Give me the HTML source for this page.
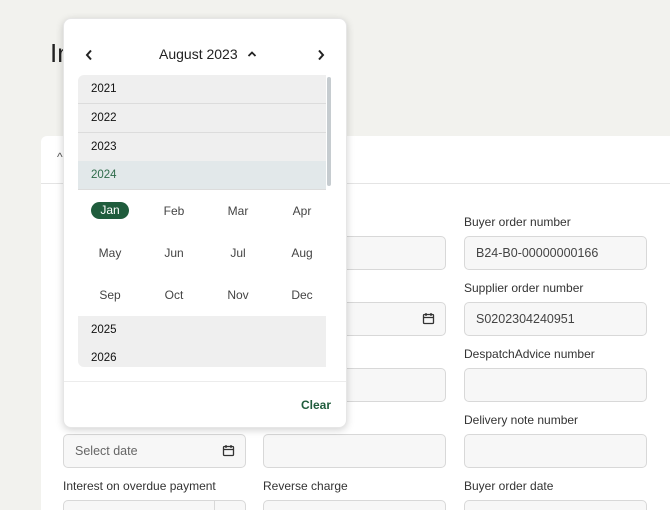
<!DOCTYPE html>
<html><head><style>
*{box-sizing:border-box;margin:0;padding:0}
html,body{width:670px;height:510px;overflow:hidden}
body{background:#f2f2ee;font-family:"Liberation Sans",sans-serif;position:relative;color:#222}
.abs{position:absolute}
.card{left:41px;top:136px;width:640px;height:374px;background:#fff;border-radius:6px 6px 0 0}
.sep{left:41px;top:183px;width:640px;height:1px;background:#e4e4e4}
.lbl{font-size:12px;color:#333}
.inp{height:34px;border:1px solid #d8d8d8;border-radius:5px;background:#f7f7f7;font-size:12.5px;color:#444;padding-left:11px;line-height:32px}
.pop{left:63px;top:18px;width:284px;height:410px;background:#fff;border-radius:8px;box-shadow:0 2px 8px rgba(0,0,0,.18);border:1px solid #e6e6e6}
.yr{position:absolute;left:15px;width:248px;height:29px;background:#efefef;border-bottom:1px solid #dcdcdc;font-size:11.5px;color:#111;padding-left:13px;line-height:28px}
.m{position:absolute;width:50px;text-align:center;font-size:12px;color:#444;margin-left:-25px}
</style></head><body>
<div class="abs" style="left:50px;top:38px;font-size:26px;color:#222">In</div>
<div class="abs card"></div>
<div class="abs sep"></div>
<div class="abs" style="left:57px;top:150px;font-size:12px;color:#555">^</div>

<div class="abs lbl" style="left:464px;top:215px">Buyer order number</div>
<div class="abs inp" style="left:464px;top:236px;width:183px">B24-B0-00000000166</div>
<div class="abs lbl" style="left:464px;top:281px">Supplier order number</div>
<div class="abs inp" style="left:464px;top:302px;width:183px">S0202304240951</div>
<div class="abs lbl" style="left:464px;top:347px">DespatchAdvice number</div>
<div class="abs inp" style="left:464px;top:368px;width:183px"></div>
<div class="abs lbl" style="left:464px;top:413px">Delivery note number</div>
<div class="abs inp" style="left:464px;top:434px;width:183px"></div>
<div class="abs lbl" style="left:464px;top:479px">Buyer order date</div>
<div class="abs inp" style="left:464px;top:500px;width:183px"></div>

<div class="abs inp" style="left:263px;top:236px;width:183px"></div>
<div class="abs inp" style="left:263px;top:302px;width:183px"></div>
<svg class="abs" style="left:422px;top:312px" width="13" height="13" viewBox="0 0 13 13"><rect x="1.5" y="2.5" width="10" height="9" rx="1" fill="none" stroke="#333" stroke-width="1.3"/><path d="M1.5 5.5h10M4 1v3M9 1v3" stroke="#333" stroke-width="1.3"/></svg>
<div class="abs lbl" style="left:340px;top:347px">y</div>
<div class="abs inp" style="left:263px;top:368px;width:183px"></div>
<div class="abs inp" style="left:263px;top:434px;width:183px"></div>
<div class="abs lbl" style="left:263px;top:479px">Reverse charge</div>
<div class="abs inp" style="left:263px;top:500px;width:183px"></div>

<div class="abs inp" style="left:63px;top:434px;width:183px;color:#666">Select date</div>
<svg class="abs" style="left:222px;top:444px" width="13" height="13" viewBox="0 0 13 13"><rect x="1.5" y="2.5" width="10" height="9" rx="1" fill="none" stroke="#333" stroke-width="1.3"/><path d="M1.5 5.5h10M4 1v3M9 1v3" stroke="#333" stroke-width="1.3"/></svg>
<div class="abs lbl" style="left:63px;top:479px">Interest on overdue payment</div>
<div class="abs inp" style="left:63px;top:500px;width:183px"></div>
<div class="abs" style="left:214px;top:501px;width:1px;height:10px;background:#d8d8d8"></div>

<div class="abs pop">
 <svg class="abs" style="left:21px;top:30px" width="8" height="12" viewBox="0 0 8 12"><path d="M6 1.5L2 6l4 4.5" fill="none" stroke="#222" stroke-width="2"/></svg>
 <div class="abs" style="left:95px;top:27px;font-size:14px;color:#222">August 2023</div>
 <svg class="abs" style="left:183px;top:31px" width="10" height="8" viewBox="0 0 10 8"><path d="M1.5 6L5 2.5L8.5 6" fill="none" stroke="#222" stroke-width="1.8"/></svg>
 <svg class="abs" style="left:253px;top:30px" width="8" height="12" viewBox="0 0 8 12"><path d="M2 1.5L6 6l-4 4.5" fill="none" stroke="#222" stroke-width="2"/></svg>
 <div class="abs" style="left:14px;top:56px;width:256px;height:292px;overflow:hidden;border-radius:6px">
  <div class="yr" style="left:0;top:0">2021</div>
  <div class="yr" style="left:0;top:29px">2022</div>
  <div class="yr" style="left:0;top:58px">2023</div>
  <div class="yr" style="left:0;top:86px;background:#e2e8ea;color:#2e6b4a">2024</div>
  <div style="position:absolute;left:0;top:115px;width:248px;height:126px">
   <div class="abs" style="left:13px;top:12px;width:38px;height:17px;background:#1f5c3c;border-radius:9px;color:#fff;font-size:12px;text-align:center;line-height:17px">Jan</div>
   <div class="m" style="left:96px;top:14px">Feb</div><div class="m" style="left:160px;top:14px">Mar</div><div class="m" style="left:224px;top:14px">Apr</div>
   <div class="m" style="left:32px;top:56px">May</div><div class="m" style="left:96px;top:56px">Jun</div><div class="m" style="left:160px;top:56px">Jul</div><div class="m" style="left:224px;top:56px">Aug</div>
   <div class="m" style="left:32px;top:98px">Sep</div><div class="m" style="left:96px;top:98px">Oct</div><div class="m" style="left:160px;top:98px">Nov</div><div class="m" style="left:224px;top:98px">Dec</div>
  </div>
  <div class="yr" style="left:0;top:241px">2025</div>
  <div class="yr" style="left:0;top:269px">2026</div>
  <div class="abs" style="left:249px;top:2px;width:4px;height:109px;background:#c6ccd0;border-radius:2px"></div>
 </div>
 <div class="abs" style="left:0;top:362px;width:282px;height:1px;background:#ececec"></div>
 <div class="abs" style="left:237px;top:379px;font-size:12px;font-weight:bold;color:#1f5c3c">Clear</div>
</div>
</body></html>
